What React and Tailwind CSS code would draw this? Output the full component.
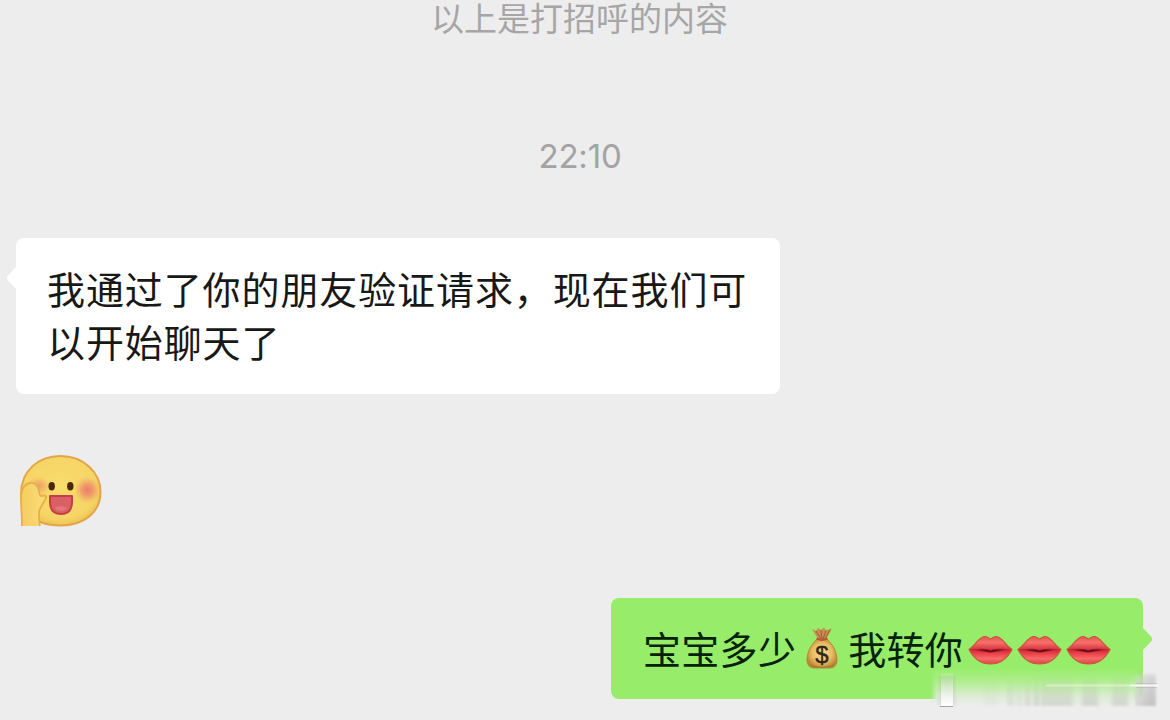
const cjk = "font-['Noto_Sans_CJK_SC',sans-serif]";

function WavingFace() {
    return (
        <svg className="block h-[76px] w-[86px]" viewBox="0 0 86 76" aria-hidden="true">
            <defs>
                <radialGradient id="face" cx="50%" cy="45%" r="58%">
                    <stop offset="0" stopColor="#f8dc6c" />
                    <stop offset="0.78" stopColor="#f5d566" />
                    <stop offset="1" stopColor="#efbd50" />
                </radialGradient>
                <radialGradient id="cheek">
                    <stop offset="0" stopColor="#ec7a6c" />
                    <stop offset="0.45" stopColor="#ee8e68" stopOpacity="0.75" />
                    <stop offset="1" stopColor="#f5b266" stopOpacity="0" />
                </radialGradient>
                <linearGradient id="hand" x1="0" x2="1">
                    <stop offset="0" stopColor="#f5cd60" />
                    <stop offset="1" stopColor="#fadd78" />
                </linearGradient>
            </defs>
            <path d="M43.500 3C66 3 83.500 19 83.500 39C83.500 60 66 72.500 44 72.500C20 72.500 4 62 4 41C4 18 21 3 43.500 3Z" fill="url(#face)" stroke="#e2a548" strokeWidth="2" />
            <circle cx="70.500" cy="37" r="14" fill="url(#cheek)" />
            <ellipse cx="22" cy="33" rx="12" ry="10" fill="url(#cheek)" opacity="0.6" />
            <ellipse cx="34.700" cy="33.300" rx="3.200" ry="4.200" fill="#4a2806" />
            <ellipse cx="53.300" cy="33.300" rx="3.200" ry="4.200" fill="#4a2806" />
            <path d="M33 43H55V49C55 57 51 61 44 61C37 61 33 57 33 49Z" fill="#da6065" stroke="#c43f43" strokeWidth="2" strokeLinejoin="round" />
            <path d="M38 55C41 52.500 47 52.500 50 55C48 59 40 59 38 55Z" fill="#e2757c" />
            <path d="M5 73C5 61 4 56 4 46C4 37 7 31 13 30C18 29.500 21 33 22 38C22 40 22.500 42 24 43L28 42.500C30 43 29.500 45 28 47C26 51 22 55 22 60C22 65 22 69 23 73Z" fill="url(#hand)" />
            <path d="M5 73C5 61 4 56 4 46C4 37 7 31 13 30C18 29.500 21 33 22 38C22 40 22.500 42 24 43L28 42.500C30 43 29.500 45 28 47C26 51 22 55 22 60C22 65 22 69 23 73" fill="none" stroke="#e9ae49" strokeWidth="1.800" />
        </svg>
    );
}

function MoneyBag() {
    return (
        <svg className="block h-[42px] w-8 shrink-0" viewBox="0 0 32 42" aria-hidden="true">
            <defs>
                <radialGradient id="bag" cx="50%" cy="48%" r="55%">
                    <stop offset="0" stopColor="#f6db94" />
                    <stop offset="0.6" stopColor="#e8bd64" />
                    <stop offset="1" stopColor="#b98334" />
                </radialGradient>
            </defs>
            <path d="M6 2L10 4L12 1L15 3L18 0.500L20 3.500L26 1.500L20 12H12Z" fill="#c98c51" />
            <path d="M10 4L15 12M15 3L16 12M20 3.500L17 12M24 3L19 12" stroke="#9e6031" strokeWidth="1" />
            <path d="M11 12H21C26 17 31 24 31 33C31 38 28 41 24 41H8C4 41 1 38 1 33C1 24 6 17 11 12Z" fill="url(#bag)" stroke="#b07c30" strokeWidth="0.800" />
            <path d="M10.500 11.500C14 13 18 13 21.500 11.500" fill="none" stroke="#b85a35" strokeWidth="2.400" />
            <path d="M5 38C10 41 22 41 27 38" fill="none" stroke="#a77230" strokeWidth="1.500" opacity="0.6" />
            <text x="16" y="35.500" textAnchor="middle" className="fill-[#302817] font-['Liberation_Sans',sans-serif] text-[24px] tracking-normal" stroke="#302817" strokeWidth="0.400">$</text>
        </svg>
    );
}

function Lips() {
    return (
        <svg className="block h-[30px] w-[45px] shrink-0" viewBox="0 0 45 30" aria-hidden="true">
            <defs>
                <linearGradient id="lipTop" x1="0" y1="0" x2="0" y2="1">
                    <stop offset="0" stopColor="#e0584f" />
                    <stop offset="0.4" stopColor="#f96f6c" />
                    <stop offset="1" stopColor="#c9252f" />
                </linearGradient>
                <linearGradient id="lipBottom" x1="0" y1="0" x2="0" y2="1">
                    <stop offset="0.4" stopColor="#b71d2a" />
                    <stop offset="0.65" stopColor="#ee464e" />
                    <stop offset="0.8" stopColor="#f96a69" />
                    <stop offset="1" stopColor="#d94744" />
                </linearGradient>
                <radialGradient id="lipGap">
                    <stop offset="0" stopColor="#520812" />
                    <stop offset="0.5" stopColor="#7d101c" />
                    <stop offset="1" stopColor="#b71d2a" />
                </radialGradient>
            </defs>
            <path d="M1 14.500C8 10 11 1.500 17 1.500C20 1.500 21 4 22.500 4C24 4 25 1.500 28 1.500C34 1.500 37 10 44 14.500C39 24 32 29 22.500 29C13 29 6 24 1 14.500Z" fill="url(#lipBottom)" />
            <path d="M1 14.500C8 10 11 1.500 17 1.500C20 1.500 21 4 22.500 4C24 4 25 1.500 28 1.500C34 1.500 37 10 44 14.500C36 14 33 14.500 28 15L22.500 16.500L17 15C12 14.500 8 14 1 14.500Z" fill="url(#lipTop)" />
            <path d="M4 14.500C10 14 13 13.500 17 14C20 14 21 15.500 22.500 15.500C24 15.500 25 14 28 14C32 13.500 36 14 41 14.500C35 15.500 29 16.500 26 17C24 18 21 18 19 17C16 16.500 10 15.500 4 14.500Z" fill="url(#lipGap)" />
            <path d="M1 14.500C8 10 11 1.500 17 1.500C20 1.500 21 4 22.500 4C24 4 25 1.500 28 1.500C34 1.500 37 10 44 14.500C39 24 32 29 22.500 29C13 29 6 24 1 14.500Z" fill="none" stroke="#c65b38" strokeWidth="1.200" />
        </svg>
    );
}

// Smudged strip over the lower corner of the last message
function Smudge() {
    const streaks = [
        [54, 14, '#b8c1b1', 0.12],
        [78, 4, '#a9b2a3', 0.3],
        [84, 10, '#b3b9ad', 0.15],
        [96, 4, '#a0a99b', 0.35],
        [104, 4, '#929d8c', 0.35],
        [110, 33, '#abb4a4', 0.35],
        [152, 16, '#a4ae9d', 0.35],
        [182, 16, '#a9b2a3', 0.35],
    ];
    return (
        <svg className="pointer-events-none absolute right-[8px] bottom-[12px] h-[48px] w-[232px]" viewBox="0 0 232 48" aria-hidden="true">
            <defs>
                <linearGradient id="smudgeFade" x1="0" y1="0" x2="0" y2="1">
                    <stop offset="0" stopColor="#a9ee85" stopOpacity="0.3" />
                    <stop offset="0.4" stopColor="#c3f0a9" stopOpacity="0.75" />
                    <stop offset="0.75" stopColor="#ddecd5" />
                    <stop offset="1" stopColor="#e9ece8" />
                </linearGradient>
                <linearGradient id="blockFade" x1="0" y1="0" x2="0" y2="1">
                    <stop offset="0" stopColor="#fff" stopOpacity="0.1" />
                    <stop offset="0.5" stopColor="#fff" stopOpacity="0.55" />
                    <stop offset="1" stopColor="#fff" />
                </linearGradient>
                <linearGradient id="streakMask" x1="0" y1="0" x2="0" y2="1">
                    <stop offset="0.3" stopColor="#000" />
                    <stop offset="0.9" stopColor="#fff" />
                </linearGradient>
                <linearGradient id="endMask" x1="0" y1="0" x2="0" y2="1">
                    <stop offset="0.1" stopColor="#000" />
                    <stop offset="0.4" stopColor="#999" />
                    <stop offset="0.9" stopColor="#fff" />
                </linearGradient>
                <linearGradient id="grayEnd" x1="0" x2="1">
                    <stop offset="0" stopColor="#dadada" />
                    <stop offset="0.8" stopColor="#c2c2c2" />
                    <stop offset="1" stopColor="#cccccc" />
                </linearGradient>
                <mask id="fadeDown"><rect width="232" height="48" fill="url(#streakMask)" /></mask>
                <mask id="fadeEnd"><rect width="232" height="48" fill="url(#endMask)" /></mask>
                <filter id="soft" x="-30%" y="-20%" width="160%" height="140%"><feGaussianBlur stdDeviation="2 0.8" /></filter>
                <filter id="softEnd"><feGaussianBlur stdDeviation="0.8" /></filter>
            </defs>
            <rect x="4" y="10" width="203" height="34" fill="url(#smudgeFade)" filter="url(#soft)" />
            <g mask="url(#fadeDown)">
                {streaks.map(([x, width, color, opacity]) => (
                    <rect key={x} x={x} y="10" width={width} height="36" fill={color} opacity={opacity} filter="url(#soft)" />
                ))}
            </g>
            <g mask="url(#fadeEnd)">
                <rect x="205" y="14" width="21" height="32" fill="url(#grayEnd)" filter="url(#softEnd)" />
            </g>
            <rect x="10" y="16" width="14" height="30" fill="#5d6658" opacity="0.18" filter="url(#soft)" />
            <rect x="11" y="13" width="12" height="33" fill="url(#blockFade)" />
            <path d="M10 46.500H23" stroke="#a3a69f" strokeWidth="1" />
            <path d="M116 25.500H200" stroke="#fff" strokeWidth="2" opacity="0.4" />
            <path d="M200 25.500H228" stroke="#fff" strokeWidth="2" opacity="0.85" />
            <path d="M206 23.500H227M206 27.500H227" stroke="#aaa" strokeWidth="1" opacity="0.4" />
        </svg>
    );
}

export default function App() {
    return (
        <main className={`relative flex h-[720px] w-[1170px] flex-col overflow-hidden bg-[#ededed] text-[#181818] ${cjk}`}>
            <p className="mr-[11px] h-[34px] text-center text-[33px] leading-[34px] text-[#a6a6a6]">以上是打招呼的内容</p>
            <time className="mt-[102px] mr-[10px] h-10 text-center font-['Inter',sans-serif] text-[33px] leading-10 tracking-[-0.2px] text-[#a3a3a3]">22:10</time>

            <div className="relative mt-[62px] ml-4 h-[156px] w-[764px] rounded-[8px] bg-white px-[31px] pt-[23px]">
                <svg className="absolute top-[28px] -left-[10px] h-6 w-[11px]" viewBox="0 0 11 24" aria-hidden="true">
                    <path d="M11 0L1.500 10Q0 12 1.500 14L11 24Z" fill="#fff" />
                </svg>
                <p className="text-[38px] leading-[53px] tracking-[0.9px] whitespace-nowrap">
                    我通过了你的朋友验证请求，现在我们可<br />以开始聊天了
                </p>
            </div>

            <div className="mt-[59px] ml-[17px]">
                <WavingFace />
            </div>

            <div className="relative mt-[69px] ml-[611px] flex h-[101px] w-[532px] items-center rounded-[8px] bg-[#97ec6a] pl-8 text-[38px] tracking-[0.3px] text-[#06220b]">
                <svg className="absolute top-[29px] -right-[10px] h-6 w-[11px]" viewBox="0 0 11 24" aria-hidden="true">
                    <path d="M0 0L9.500 10Q11 12 9.500 14L0 24Z" fill="#97ec6a" />
                </svg>
                <span className="pb-[3px] leading-[53px]">宝宝多少</span>
                <span className="mr-[10px] mb-px ml-[10px]"><MoneyBag /></span>
                <span className="pb-[3px] leading-[53px]">我转你</span>
                <span className="mt-[2px] ml-[5px] flex gap-1">
                    <Lips />
                    <Lips />
                    <Lips />
                </span>
            </div>
            <Smudge />
        </main>
    );
}
